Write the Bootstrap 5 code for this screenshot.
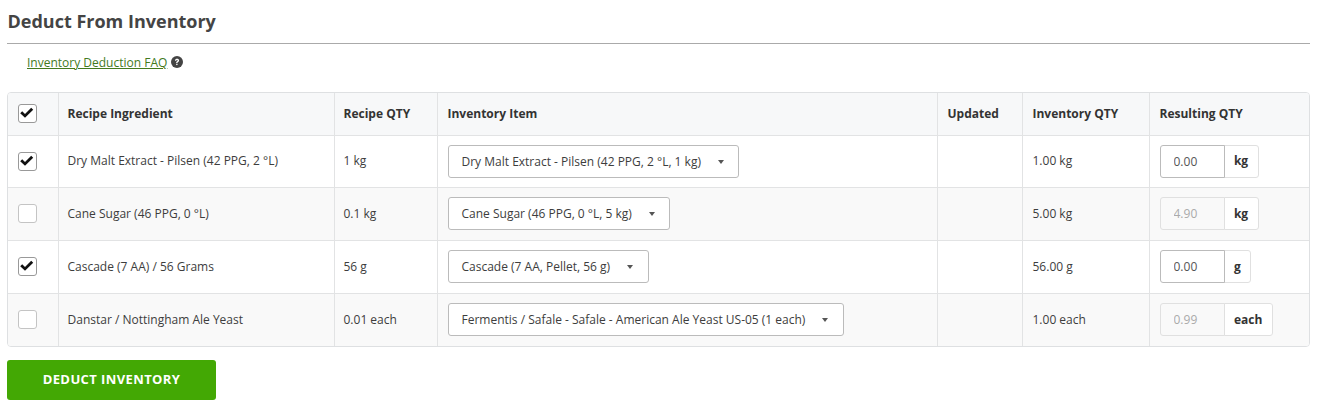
<!DOCTYPE html>
<html lang="en">
<head>
    <meta charset="UTF-8">
    <title>Deduct From Inventory</title>
    <link href="https://cdn.jsdelivr.net/npm/bootstrap@5.3.3/dist/css/bootstrap.min.css" rel="stylesheet">
    <style>
        body { font-family: "Open Sans", sans-serif; font-size: 12px; color: #3d3d3d; background: #fff; }
        .page-wrap { padding: 6px 8px 0 7px; }
        .page-title { font-size: 18px; font-weight: 700; color: #444; line-height: 30px; margin: 0; padding: 0 0 7px 0.5px; border-bottom: 1px solid #aaa; }
        .faq-row { padding: 10px 0 0 20px; line-height: 18px; height: 48px; }
        .faq-link { color: #437a1e; }
        .faq-icon { width: 12px; height: 12px; vertical-align: -1px; margin-left: 1px; }
        .table-box { border: 1px solid #dee0e2; border-radius: 4px; overflow: hidden; }
        .inv-table { table-layout: fixed; width: 100%; margin: 0; border-collapse: collapse; font-size: 12px; --bs-table-color: #3d3d3d; --bs-table-border-color: #e2e3e4; }
        .inv-table th, .inv-table td { padding: 0 10px; vertical-align: middle; border: 1px solid #e2e3e4; }
        .inv-table tr > :first-child { border-left: 0; }
        .inv-table tr > :last-child { border-right: 0; }
        .inv-table tr > :nth-child(2), .inv-table tr > :nth-child(3) { padding-left: 9px; }
        .inv-table thead tr > * { border-top: 0; }
        .inv-table tbody tr:last-child > * { border-bottom: 0; }
        .inv-table thead th { background: #f7f8f9; font-weight: 700; height: 42px; color: #333; }
        .inv-table tbody td { height: 53px; }
        .inv-table tbody tr:nth-child(1) td { height: 52px; }
        .inv-table tbody tr:nth-child(even) td { background: #f9f9f9; }
        .check-box { display: block; width: 19px; height: 19px; border: 1px solid #c4c4c4; border-radius: 3px; background: #fff; }
        .check-box svg { display: block; width: 17px; height: 17px; }
        .check-box.is-on { border-color: #999; }
        .item-btn { font-size: 12px; color: #3d3d3d; background: #fff; border: 1px solid #bbb; border-radius: 3px; height: 33px; padding: 0 14.4px 0 13px; line-height: 31px; white-space: nowrap; }
        .item-btn::after { margin-left: 17px; vertical-align: 2px; border-top-width: 4px; border-left-width: 3.5px; border-right-width: 3.5px; color: #555; }
        .qty-group { width: auto; flex-wrap: nowrap; display: inline-flex; }
        .qty-group > .qty-input { width: 65px; flex: none; height: 33px; font-size: 12px; color: #555; padding: 0 13px; border: 1px solid #bbb; border-radius: 3px; }
        .qty-group > .qty-input:disabled { background: #f9f9f9; color: #aaa; border-color: #e0e0e0; }
        .qty-unit { height: 33px; font-size: 12px; font-weight: 700; color: #333; background: #fff; border: 1px solid #e0e0e0; padding: 0 9.4px; border-radius: 3px; }
        .deduct-btn { width: 209px; height: 40px; margin-top: 13px; padding: 0; background: #43a804; border: 0; border-radius: 3px; color: #fff; font-size: 13px; font-weight: 700; letter-spacing: .4px; }
        .deduct-btn:hover { background: #43a804; color: #fff; }
    </style>
</head>
<body>

<div class="page-wrap">
    <h1 class="page-title">Deduct From Inventory</h1>

    <div class="faq-row">
        <a href="#" class="faq-link">Inventory Deduction FAQ</a>
        <svg class="faq-icon" viewBox="0 0 16 16"><circle cx="8" cy="8" r="8" fill="#444"/><path d="M5.300 6.200c.1-1.600 1.200-2.500 2.800-2.500 1.500 0 2.700.9 2.700 2.200 0 1.100-.6 1.600-1.400 2.100-.6.4-.8.6-.8 1.200H6.900c0-1.100.3-1.600 1.200-2.200.6-.4.9-.6.9-1 0-.5-.4-.8-1-.8-.6 0-1 .4-1.100 1z" fill="#fff"/><rect x="6.900" y="10.300" width="1.800" height="1.800" fill="#fff"/></svg>
    </div>

    <div class="table-box">
        <table class="table inv-table">
            <colgroup>
                <col style="width:50px"><col style="width:276px"><col style="width:103px"><col style="width:500px"><col style="width:85px"><col style="width:127px"><col>
            </colgroup>
            <thead>
                <tr>
                    <th><span class="check-box is-on"><svg viewBox="0 0 17 17"><path d="M1.200 8.200l2-2 2.800 2.700 6.200-6.200 2 2-8.200 8.100z" fill="#111"/></svg></span></th>
                    <th>Recipe Ingredient</th>
                    <th>Recipe QTY</th>
                    <th>Inventory Item</th>
                    <th>Updated</th>
                    <th>Inventory QTY</th>
                    <th>Resulting QTY</th>
                </tr>
            </thead>
            <tbody>
                <tr>
                    <td><span class="check-box is-on"><svg viewBox="0 0 17 17"><path d="M1.200 8.200l2-2 2.800 2.700 6.200-6.200 2 2-8.200 8.100z" fill="#111"/></svg></span></td>
                    <td>Dry Malt Extract - Pilsen (42 PPG, 2 °L)</td>
                    <td>1 kg</td>
                    <td><button type="button" class="btn item-btn dropdown-toggle">Dry Malt Extract - Pilsen (42 PPG, 2 °L, 1 kg)</button></td>
                    <td></td>
                    <td>1.00 kg</td>
                    <td><div class="input-group qty-group"><input class="form-control qty-input" value="0.00"><span class="input-group-text qty-unit">kg</span></div></td>
                </tr>
                <tr>
                    <td><span class="check-box"></span></td>
                    <td>Cane Sugar (46 PPG, 0 °L)</td>
                    <td>0.1 kg</td>
                    <td><button type="button" class="btn item-btn dropdown-toggle">Cane Sugar (46 PPG, 0 °L, 5 kg)</button></td>
                    <td></td>
                    <td>5.00 kg</td>
                    <td><div class="input-group qty-group"><input class="form-control qty-input" value="4.90" disabled><span class="input-group-text qty-unit">kg</span></div></td>
                </tr>
                <tr>
                    <td><span class="check-box is-on"><svg viewBox="0 0 17 17"><path d="M1.200 8.200l2-2 2.800 2.700 6.200-6.200 2 2-8.200 8.100z" fill="#111"/></svg></span></td>
                    <td>Cascade (7 AA) / 56 Grams</td>
                    <td>56 g</td>
                    <td><button type="button" class="btn item-btn dropdown-toggle">Cascade (7 AA, Pellet, 56 g)</button></td>
                    <td></td>
                    <td>56.00 g</td>
                    <td><div class="input-group qty-group"><input class="form-control qty-input" value="0.00"><span class="input-group-text qty-unit">g</span></div></td>
                </tr>
                <tr>
                    <td><span class="check-box"></span></td>
                    <td>Danstar / Nottingham Ale Yeast</td>
                    <td>0.01 each</td>
                    <td><button type="button" class="btn item-btn dropdown-toggle">Fermentis / Safale - Safale - American Ale Yeast US-05 (1 each)</button></td>
                    <td></td>
                    <td>1.00 each</td>
                    <td><div class="input-group qty-group"><input class="form-control qty-input" value="0.99" disabled><span class="input-group-text qty-unit">each</span></div></td>
                </tr>
            </tbody>
        </table>
    </div>

    <button type="button" class="btn deduct-btn">DEDUCT INVENTORY</button>
</div>

<script src="https://cdn.jsdelivr.net/npm/bootstrap@5.3.3/dist/js/bootstrap.bundle.min.js"></script>
</body>
</html>
